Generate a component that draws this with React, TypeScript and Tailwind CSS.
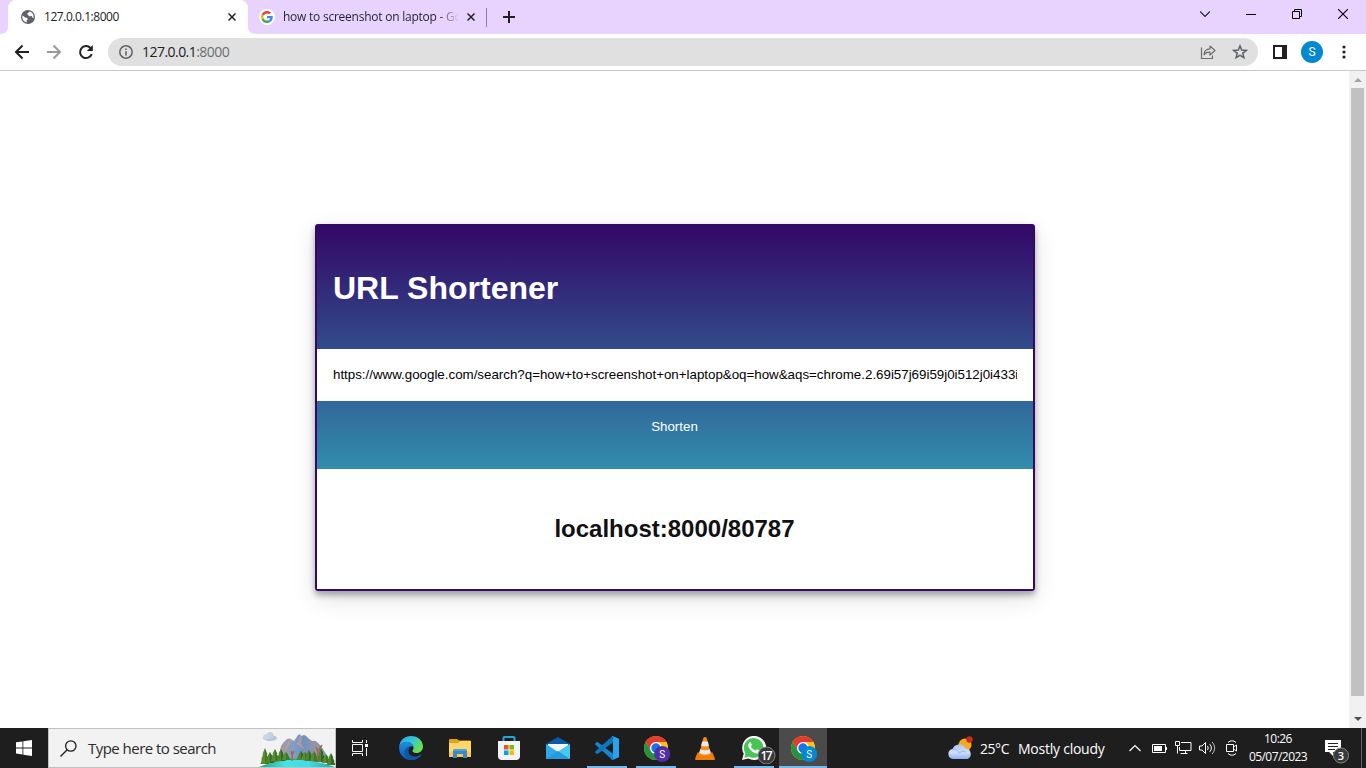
import React, { useId } from "react";

type IconProps = { className?: string };

const Globe = () => (
  <svg width="14" height="14" viewBox="0 0 14 14">
    <circle cx="7" cy="7" r="7" fill="#5f6368" />
    <path d="M1.500 5.600C3 6.200 3.200 7.600 5 7.700c1.300 0 1.800.6 1.700 1.500-.1.800-1 .7-1 1.600v1.700C3.300 12 1.300 10 1.300 7z" fill="#fff" />
    <path d="M8.300 1.600c-.2 1.300-1.900 1.100-2 2.300-.1 1 1 .7 1.300 1.500.4 1 1.700 1.100 2.500.7.700-.3 1.200.2 1.300 1 .1.900.5 1 1.200.9C13 4.500 11 2.200 8.300 1.600z" fill="#fff" />
  </svg>
);

const Cross = ({ className = "" }: IconProps) => (
  <svg className={className} width="8" height="8" viewBox="0 0 8 8">
    <path d="M.5.5l7 7M7.500.5l-7 7" stroke="#202124" strokeWidth="1.500" />
  </svg>
);

const GoogleG = () => (
  <svg width="16" height="16" viewBox="0 0 16 16">
    <circle cx="8" cy="8" r="8" fill="#fff" />
    <g transform="translate(2 2) scale(.25)">
      <path fill="#EA4335" d="M24 9.500c3.540 0 6.710 1.220 9.210 3.600l6.850-6.850C35.900 2.380 30.470 0 24 0 14.620 0 6.510 5.380 2.560 13.220l7.980 6.190C12.430 13.720 17.740 9.500 24 9.500z" />
      <path fill="#4285F4" d="M46.980 24.550c0-1.570-.15-3.090-.38-4.550H24v9.020h12.940c-.58 2.960-2.260 5.480-4.780 7.180l7.730 6c4.510-4.180 7.090-10.360 7.090-17.650z" />
      <path fill="#FBBC05" d="M10.530 28.590c-.48-1.450-.76-2.990-.76-4.590s.27-3.140.76-4.590l-7.980-6.190C.92 16.460 0 20.120 0 24s.92 7.540 2.560 10.780l7.970-6.190z" />
      <path fill="#34A853" d="M24 48c6.480 0 11.930-2.130 15.890-5.810l-7.730-6c-2.150 1.450-4.920 2.300-8.160 2.300-6.260 0-11.570-4.220-13.470-9.910l-7.980 6.190C6.510 42.620 14.620 48 24 48z" />
    </g>
  </svg>
);

const Arrow = ({ color, flip }: { color: string; flip?: boolean }) => (
  <svg width="16" height="16" viewBox="0 0 16 16" className={flip ? "-scale-x-100" : ""}>
    <path d="M15 8H2M8.500 1.500L2 8l6.500 6.500" fill="none" stroke={color} strokeWidth="2" />
  </svg>
);

const Reload = () => (
  <svg width="16" height="16" viewBox="0 0 16 16">
    <path d="M13.700 10.100A6 6 0 1 1 12.500 4" fill="none" stroke="#202124" strokeWidth="2" />
    <path d="M14.800 1v6H8.800z" fill="#202124" />
  </svg>
);

const InfoIcon = () => (
  <svg width="14" height="14" viewBox="0 0 14 14">
    <circle cx="7" cy="7" r="6.200" fill="none" stroke="#5f6368" strokeWidth="1.500" />
    <path d="M7 6.200v4.300M7 3.400V5" stroke="#5f6368" strokeWidth="1.600" />
  </svg>
);

const Share = () => (
  <svg width="16" height="16" viewBox="0 0 16 16">
    <path d="M1.500 3.500v11h11v-3" fill="none" stroke="#6b6d70" strokeWidth="1.200" />
    <path d="M4 10.500C4.300 6.700 6.500 4.900 10 4.800V2l5 4.500-5 4.500V8.200C7.300 8.100 5.500 8.900 4 10.500z" fill="none" stroke="#6b6d70" strokeWidth="1.200" strokeLinejoin="round" />
  </svg>
);

const Star = () => (
  <svg width="16" height="16" viewBox="0 0 16 16">
    <path d="M8 1.900l1.700 4.200 4.500.3-3.500 2.900 1.200 4.400L8 11.300l-3.900 2.400 1.200-4.400L1.800 6.400l4.500-.3z" fill="none" stroke="#5f6368" strokeWidth="1.500" />
  </svg>
);

const ChromeLogo = ({ badge }: { badge: string }) => (
  <svg width="28" height="28" viewBox="0 0 28 28">
    <circle cx="12" cy="12" r="12" fill="#fbc116" />
    <path d="M1.610 6A12 12 0 0 1 22.390 6L12 6.600 6.800 15z" fill="#e33b2e" />
    <path d="M1.610 6A12 12 0 0 0 12 24l5.200-9-5.200 2.500L6.800 15z" fill="#229342" />
    <path d="M12 6h10.390A12 12 0 0 1 12 24l5.200-9z" fill="#fbc116" />
    <circle cx="12" cy="12" r="6" fill="#fff" />
    <circle cx="12" cy="12" r="4.700" fill="#1a73e8" />
    <circle cx="18.200" cy="18" r="8" fill={badge} />
    <text x="18.200" y="21.700" textAnchor="middle" fontSize="10" fill="#fff" fontFamily="Roboto, sans-serif">S</text>
  </svg>
);

const Edge = () => {
  const id = useId();
  return (
    <svg width="24" height="24" viewBox="0 0 24 24">
      <defs>
        <linearGradient id={id + "a"} x1="0" y1="0" x2="1" y2=".5">
          <stop offset="0" stopColor="#2aa7e8" />
          <stop offset=".5" stopColor="#31c3dc" />
          <stop offset="1" stopColor="#6be04d" />
        </linearGradient>
        <linearGradient id={id + "b"} x1="0" y1="0" x2="0" y2="1">
          <stop offset="0" stopColor="#1b8fe0" />
          <stop offset="1" stopColor="#0c57b5" />
        </linearGradient>
      </defs>
      <path d="M.2 10.500C1 4 6 0 12 0c7 0 12 4.700 12 10.500 0 4-3 6.500-6.500 6.500-3.300 0-4.600-1.300-4-2.400.5-.8 1.200-1.300 1-3C14.200 8.500 11.500 6 8 6 4.500 6 1.500 8 .2 10.500z" fill={`url(#${id}a)`} />
      <path d="M.2 10.500C1.500 7.500 4.800 6 8 6c3.700 0 6 2.200 6.500 4.700C12.500 9.500 9.500 11 9.200 14.500c-.2 4 3.300 7.500 8 7 2-.3 3.700-1.200 4.800-2.300C20 22.300 16.500 24 12 24 5 24-.6 18 .2 10.500z" fill={`url(#${id}b)`} />
      <path d="M9.200 14.500c-.3 5 6 8.500 12.600 4 .5-.3.900.2.500.8C19.700 23 15 24.500 11 23.900 6.500 22.500 4.500 18.500 6 14.500c.8-2.200 3.500-4.500 6.800-4.400-2.200.5-3.500 2.200-3.600 4.400z" fill="#1155a0" />
    </svg>
  );
};

const Explorer = () => (
  <svg width="22" height="19" viewBox="0 0 22 19">
    <path d="M0 1.200Q0 0 1 0h7l2 1.500h11q1 0 1 1V18H0z" fill="#e3a215" />
    <path d="M0 4h9l2-2h11v16H0z" fill="#ffd768" />
    <path d="M0 13h22v5H0z" fill="#fbc951" />
    <path d="M4 19v-7q0-2 2-2h10q2 0 2 2v7h-4v-4H8v4z" fill="#3889ca" />
    <path d="M5 10h12v2H5z" fill="#4aa3e2" />
  </svg>
);

const Store = () => (
  <svg width="24" height="24" viewBox="0 0 24 24">
    <path d="M6.500 7V1.800Q6.500 1 7.500 1h9q1 0 1 .8V7" fill="none" stroke="#27a4dd" strokeWidth="2" />
    <path d="M1 5h22v15q0 4-4 4H5q-4 0-4-4z" fill="#f2f3f5" />
    <path d="M7 9h4.500v4.500H7z" fill="#f25022" />
    <path d="M12.500 9H17v4.500h-4.500z" fill="#7fba00" />
    <path d="M7 14.500h4.500V19H7z" fill="#00a4ef" />
    <path d="M12.500 14.500H17V19h-4.500z" fill="#ffb900" />
  </svg>
);

const Mail = () => (
  <svg width="24" height="22" viewBox="0 0 24 22">
    <path d="M0 7l12-7 12 7v4H0z" fill="#0a58a8" />
    <path d="M2 7h20v6l-10 4L2 13z" fill="#f1f3f5" />
    <path d="M0 7l12 8 12-8v15H0z" fill="#31a9e9" />
    <path d="M12 15l12-8v15z" fill="#46c8f5" />
    <path d="M0 22l12-8 12 8z" fill="#249bdf" />
  </svg>
);

const VSCode = () => (
  <svg width="24" height="24" viewBox="0 0 24 24">
    <path d="M1.500 6.200L.2 7.400q-.4.600 0 1.200L17.500 24l.8-5.900L3 6.200q-.8-.5-1.500 0z" fill="#1686cf" />
    <path d="M1.500 17.800L.2 16.600q-.4-.6 0-1.200L17.500 0l.8 5.900L3 17.800q-.8.5-1.500 0z" fill="#0f76bf" />
    <path d="M17.500 0L24 2.800v18.400L17.500 24q-.8 0-1.300-.6 1.800.5 1.800-1.400V2q0-1.900-1.800-1.400.5-.6 1.300-.6z" fill="#29a3f0" />
  </svg>
);

const Vlc = () => (
  <svg width="20" height="23" viewBox="0 0 20 23">
    <path d="M2.500 15.500h15L20 22q0 1-1 1H1q-1 0-1-1z" fill="#f07c0c" />
    <path d="M8.500.5Q10-.5 11.500.5L16 17.500q-6 3-12 0z" fill="#fa8b16" />
    <path d="M7.200 4.500h5.600l1.200 4.200q-4 1.600-8 0z" fill="#e7e9eb" />
    <path d="M5.200 12.300q4.800 1.800 9.600 0l1 3.700q-5.800 3-11.600 0z" fill="#e7e9eb" />
  </svg>
);

const WhatsApp = () => (
  <svg width="34" height="28" viewBox="0 0 34 28">
    <path d="M0 24l1.700-6.200A12 12 0 1 1 6.300 22.400z" fill="#fff" />
    <path d="M2.300 21.700l1.200-4.300A9.800 9.800 0 1 1 6.900 20.500z" fill="#45c655" />
    <path d="M8.700 6.600c-.5-.5-1.200-.3-1.700.4-2 2.600.4 6 2.600 8 2.300 2.100 5.900 3.600 7.800 1.600 1-1 .8-1.900.3-2.200l-2.400-1.200c-.9-.3-1.200 1.400-2 1.200-1.700-.5-3.700-2.300-4.300-3.900-.2-.7 1.200-1.100.9-2z" fill="#fff" />
    <circle cx="24.500" cy="19.500" r="8.500" fill="#393939" stroke="#868686" />
    <text x="24.500" y="23.500" textAnchor="middle" fontSize="12" fontWeight="600" fill="#fff" fontFamily="Open Sans, sans-serif" textLength="12">17</text>
  </svg>
);

const Landscape = () => {
  const id = useId();
  const trees = [[6, 35, 16], [11, 34, 11], [16, 32, 12], [22, 32, 12], [27, 31, 8], [42, 31, 9], [46, 31, 8], [50, 32, 11], [55, 32, 10], [62, 33, 14], [67, 34, 9], [72, 36, 12]];
  return (
    <svg width="76" height="38" viewBox="0 0 76 38">
      <defs>
        <linearGradient id={id + "m"} x1="0" y1="0" x2="1" y2="0">
          <stop offset="0" stopColor="#b09a92" />
          <stop offset=".3" stopColor="#7d9fc8" />
          <stop offset=".5" stopColor="#6f93c0" />
          <stop offset=".75" stopColor="#9a93a5" />
          <stop offset="1" stopColor="#7d97bb" />
        </linearGradient>
        <linearGradient id={id + "w"} x1="0" y1="0" x2="1" y2="0">
          <stop offset="0" stopColor="#23a08f" />
          <stop offset=".35" stopColor="#43e5e4" />
          <stop offset=".65" stopColor="#3fdcea" />
          <stop offset="1" stopColor="#22a6a0" />
        </linearGradient>
      </defs>
      <path d="M19 31C22 25 20 18 24 14l4-4q2-1 4 0l3 2 4-6q2-2 3 1l3-1q2 0 4 3l4 3q3-1 5 1l4 4q5 7 8 14z" fill={`url(#${id}m)`} />
      <path d="M30 10l3 1-3 6-6 8q3-8 6-15zM41 6l2 2-1 6 4 7-9-6q3-3 4-9z" fill="#d79986" opacity=".6" />
      <ellipse cx="11" cy="9" rx="7" ry="3" fill="#b3c6d4" />
      <circle cx="11" cy="6.500" r="3.600" fill="#c3d4e1" />
      <circle cx="7" cy="8" r="2.800" fill="#c7d8e3" />
      <path d="M8 33Q20 29 38 30t31 3z" fill="#568a30" />
      <path d="M0 38Q10 33.500 22 32Q38 29.500 54 32.500Q66 34 76 38z" fill={`url(#${id}w)`} />
      {trees.map(([x, y, h], i) => (
        <g key={i}>
          <path d={`M${x} ${y - h}l2.500 ${h * 0.4}h-.8l2 ${h * 0.3}h-.8l1.600 ${h * 0.3}h-9l1.600-${h * 0.3}h-.8l2-${h * 0.3}h-.8z`} fill={i % 2 ? "#2c6a28" : "#3a7a29"} />
          <path d={`M${x} ${y - h}v${h}h-4.500l1.600-${h * 0.3}h-.8l2-${h * 0.3}h-.8z`} fill="#7d9a30" opacity=".5" />
        </g>
      ))}
      <path d="M33 32q1-7-1-10M33 26l2-4M58 31q2-8-1-13M59 22l4-6" fill="none" stroke="#a0694e" strokeWidth="1.400" />
    </svg>
  );
};

const TaskView = () => (
  <svg width="17" height="16" viewBox="0 0 17 16" fill="none" stroke="#f5f5f5">
    <path d="M.5 0v2.500h10V0M.5 16v-2.500h10V16M.5 4.500h10v7H.5zM14.500 0v3M14.500 8v8" />
    <path d="M13 4h3v3h-3z" fill="#fff" stroke="none" />
  </svg>
);

const Weather = () => {
  const id = useId();
  return (
    <svg width="26" height="24" viewBox="0 0 26 24">
      <defs>
        <linearGradient id={id} x1="0" y1="0" x2="0" y2="1">
          <stop offset="0" stopColor="#a9c6f5" />
          <stop offset=".55" stopColor="#cfdffb" />
          <stop offset="1" stopColor="#8fb0ef" />
        </linearGradient>
      </defs>
      <circle cx="17" cy="9" r="6.500" fill="#f7a81b" />
      <circle cx="21.500" cy="3.500" r="3.200" fill="#c62c22" />
      <path d="M5 23a5 5 0 0 1-.5-9.900A7 7 0 0 1 17.500 12.500a5.500 5.500 0 0 1 2 10.500z" fill={`url(#${id})`} />
      <path d="M4.500 13.500Q9 12.500 11 17q3-3 7-1" fill="none" stroke="#8db0ec" strokeWidth=".8" />
    </svg>
  );
};

function TabStrip() {
  return (
    <header className="flex h-[34px] bg-[#e8d3ff]">
      <svg className="self-end" width="8" height="8" viewBox="0 0 8 8"><path d="M8 0v8H0Q8 8 8 0" fill="#fff" /></svg>
      <div className="flex w-[240px] items-center rounded-t-lg bg-white pl-[13px]">
        <Globe />
        <span className="ml-[9px] w-[184px] text-[12px] tracking-[-0.45px] text-[#202124]">127.0.0.1:8000</span>
        <Cross />
      </div>
      <svg className="self-end" width="8" height="8" viewBox="0 0 8 8"><path d="M0 0v8H8Q0 8 0 0" fill="#fff" /></svg>
      <div className="flex items-center pl-[3px]">
        <GoogleG />
        <span className="ml-2 w-[176px] whitespace-nowrap bg-linear-to-r from-[#202124] from-88% to-transparent bg-clip-text text-[12px] tracking-[-0.24px] text-transparent">how to screenshot on laptop - Go</span>
        <Cross className="ml-2" />
      </div>
      <div className="ml-[11px] mt-2 h-[19px] w-px bg-[#8d8099]" />
      <svg className="ml-4 mt-[11px]" width="12" height="12" viewBox="0 0 12 12"><path d="M6 0v12M0 6h12" stroke="#202124" strokeWidth="2" /></svg>
      <div className="ml-auto flex gap-[35px] pr-[18px] pt-[9px]">
        <svg width="10" height="10" viewBox="0 0 10 10"><path d="M0 2.500l5 5 5-5" fill="none" stroke="#202124" strokeWidth="1.200" /></svg>
        <svg className="ml-px" width="10" height="10" viewBox="0 0 10 10"><path d="M0 5.500h10" stroke="#000" /></svg>
        <svg className="ml-px" width="10" height="10" viewBox="0 0 10 10"><path d="M.5 2.500h7v7h-7zM2.500 2.500v-2h7v7h-2" fill="none" stroke="#000" /></svg>
        <svg className="ml-px" width="10" height="10" viewBox="0 0 10 10"><path d="M0 0l10 10M10 0L0 10" stroke="#000" strokeWidth="1.100" /></svg>
      </div>
    </header>
  );
}

function Toolbar() {
  return (
    <div className="flex h-[37px] items-center border-b border-[#c9c7cb] bg-white pl-[14px] pr-[8px]">
      <Arrow color="#202124" />
      <div className="ml-4"><Arrow color="#97999b" flip /></div>
      <div className="ml-4"><Reload /></div>
      <div className="ml-[14px] flex h-7 w-[1150px] items-center rounded-full bg-[#e0e0e0] pl-[11px] pr-[10px]">
        <InfoIcon />
        <span className="ml-[9px] text-[14px] leading-5 tracking-[-0.54px] text-[#202124]">127.0.0.1<span className="text-[#6b6e72]">:8000</span></span>
        <div className="ml-auto flex gap-4"><Share /><Star /></div>
      </div>
      <svg className="ml-[15px]" width="14" height="14" viewBox="0 0 14 14"><path d="M0 0h14v14H0zM2 2v10h7V2z" fill="#202124" fillRule="evenodd" /></svg>
      <div className="ml-[14px] flex size-[22px] items-center justify-center rounded-full bg-[#0288d1] font-[Roboto] text-[12px] text-white">S</div>
      <svg className="ml-[19px]" width="4" height="14" viewBox="0 0 4 14" fill="#202124"><circle cx="2" cy="2" r="1.600" /><circle cx="2" cy="7" r="1.600" /><circle cx="2" cy="12" r="1.600" /></svg>
    </div>
  );
}

function Shortener() {
  return (
    <section className="flex h-[367px] w-[720px] flex-col rounded-[3px] border-2 border-[#330867] bg-[linear-gradient(#330867,#30cfd0)] font-['Liberation_Sans',Arial,sans-serif] shadow-[0_4px_6px_rgba(0,0,0,0.32),0_8px_24px_rgba(0,0,0,0.12)]">
      <h1 className="h-[123px] pl-4 pt-[44px] text-[32px] font-bold leading-[37px] text-white">URL Shortener</h1>
      <div className="h-[52px] bg-white px-4 leading-[52px]">
        <div className="overflow-hidden whitespace-nowrap text-[13.333px] tracking-[-0.005px] text-black">https://www.google.com/search?q=how+to+screenshot+on+laptop&amp;oq=how&amp;aqs=chrome.2.69i57j69i59j0i512j0i433i</div>
      </div>
      <button className="h-[68px] pb-[17px] pr-px text-[13.333px] text-white">Shorten</button>
      <div className="flex flex-1 items-center justify-center bg-white pr-px text-[24px] font-bold text-[#111]">localhost:8000/80787</div>
    </section>
  );
}

function TaskApp({ children, running, active }: { children?: React.ReactNode; running?: boolean; active?: boolean }) {
  return (
    <div className={`flex h-10 w-12 flex-col items-center ${active ? "bg-[#4b4b4b]" : ""}`}>
      <div className="flex h-[38px] w-full items-center justify-center pt-[2px]">{children}</div>
      {running && <div className={`h-[2px] bg-[#76b9ed] ${active ? "w-12" : "w-10"}`} />}
    </div>
  );
}

function Taskbar() {
  return (
    <footer className="flex h-10 bg-[#1e1e1e] text-white">
      <div className="flex w-12 items-center justify-center">
        <svg width="16" height="16" viewBox="0 0 16 16" fill="#fff"><path d="M0 2.300l6.500-.9v6.100H0zM7.300 1.300L16 0v7.500H7.300zM0 8.400h6.500v6.100L0 13.600zM7.300 8.400H16V16l-8.700-1.300z" /></svg>
      </div>
      <div className="flex w-[288px] items-center border border-[#c0c0c0] bg-[#f2f2f2] pl-[11px]">
        <svg width="17" height="17" viewBox="0 0 17 17" fill="none" stroke="#1f1f1f" strokeWidth="1.300"><circle cx="10.800" cy="6" r="5.200" /><path d="M7.200 9.800L.5 16.500" /></svg>
        <span className="ml-[11px] text-[15px] tracking-[-0.53px] text-[#2b2b2b]">Type here to search</span>
        <div className="ml-auto"><Landscape /></div>
      </div>
      <div className="flex w-12 items-center justify-center"><TaskView /></div>
      <nav className="ml-[3px] flex gap-px">
        <TaskApp><Edge /></TaskApp>
        <TaskApp><Explorer /></TaskApp>
        <TaskApp><Store /></TaskApp>
        <TaskApp><Mail /></TaskApp>
        <TaskApp running><VSCode /></TaskApp>
        <TaskApp running><div className="pl-1 pt-1"><ChromeLogo badge="#512da8" /></div></TaskApp>
        <TaskApp><Vlc /></TaskApp>
        <TaskApp running><div className="pl-2.5 pt-1"><WhatsApp /></div></TaskApp>
        <TaskApp running active><div className="pl-1 pt-1"><ChromeLogo badge="#0288d1" /></div></TaskApp>
      </nav>
      <div className="ml-auto flex w-[419px] items-center">
        <div className="w-[33px] pb-px pl-px"><Weather /></div>
        <span className="w-[38px] whitespace-nowrap text-[14px] tracking-[-0.45px]">25°C</span>
        <span className="w-[111px] whitespace-nowrap text-[14px] tracking-[-0.24px]">Mostly cloudy</span>
        <svg width="12" height="8" viewBox="0 0 12 8"><path d="M.5 7L6 1.500 11.500 7" fill="none" stroke="#fff" strokeWidth="1.200" /></svg>
        <svg className="ml-[11px] mt-px" width="15" height="10" viewBox="0 0 15 10"><path d="M.5.5h13v8H.5z" fill="none" stroke="#fff" /><path d="M2 2h8v5H2zM14 3h1v3h-1z" fill="#fff" /></svg>
        <svg className="ml-2" width="17" height="14" viewBox="0 0 17 14" fill="none" stroke="#fff"><path d="M6 1.500h10v8H4.500V6M.5.500h4v4h-4zM2.500 4.500v8M10.500 9.500v3M5.500 12.500h7" /></svg>
        <svg className="ml-[7px]" width="17" height="14" viewBox="0 0 17 14" fill="none" stroke="#fff"><path d="M.5 5v4h2.500l3.500 3.500v-11L3 5zM8.500 5q1.500 2 0 4M10.800 3.200q3.200 3.800 0 7.600" /><path d="M13.200 1q5 6 0 12" stroke="#bbb" /></svg>
        <svg className="ml-2.5" width="13" height="16" viewBox="0 0 13 16" fill="none" stroke="#fff"><path d="M.5 4.500h7v7h-7zM7.500 7l3-2v6l-3-2M2 2.500Q6-1 10 2.500M2 13.500q4 3.500 8 0" /></svg>
        <div className="ml-[8px] flex w-[62px] flex-col items-center whitespace-nowrap pb-px text-[12px] leading-[18px] tracking-[-0.55px]"><span>10:26</span><span>05/07/2023</span></div>
        <svg className="ml-4 mt-1.5" width="25" height="25" viewBox="0 0 25 25">
          <path d="M0 1h16v12H8v4l-4-4H0z" fill="#fff" />
          <path d="M3 4.500h10M3 7.500h10M3 10.500h7" stroke="#222" />
          <circle cx="16" cy="16.500" r="7.500" fill="#393939" stroke="#858585" />
          <text x="16" y="20.500" textAnchor="middle" fontSize="11" fontWeight="600" fill="#fff" fontFamily="Open Sans, sans-serif">3</text>
        </svg>
        <div className="ml-auto mr-1 h-10 w-px bg-[#606060]" />
      </div>
    </footer>
  );
}

export default function App() {
  return (
    <div className="flex h-[768px] w-[1366px] flex-col overflow-hidden bg-white font-['Open_Sans','Noto_Sans',sans-serif]">
      <TabStrip />
      <Toolbar />
      <main className="flex min-h-0 flex-1">
        <div className="flex flex-1 justify-center pl-px pt-[153px]"><Shortener /></div>
        <div className="flex w-[17px] flex-col items-center bg-[#f1f1f1]">
          <svg className="h-[17px] shrink-0" width="8" height="17" viewBox="0 0 8 17"><path d="M0 11l4-4 4 4z" fill="#a3a3a3" /></svg>
          <div className="h-[608px] w-[13px] bg-[#c1c1c1]" />
          <svg className="mt-[15px]" width="8" height="17" viewBox="0 0 8 17"><path d="M0 6l4 4 4-4z" fill="#505050" /></svg>
        </div>
      </main>
      <Taskbar />
    </div>
  );
}
